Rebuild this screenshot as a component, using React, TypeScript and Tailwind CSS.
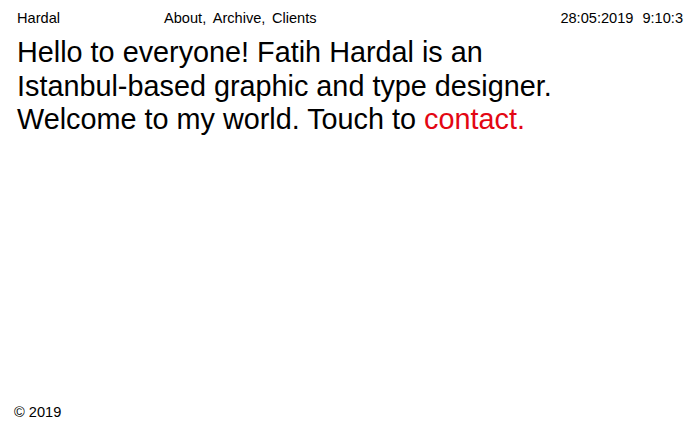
export default function App() {
  return (
    <div
      className="relative w-[700px] h-[438px] bg-white text-black flex flex-col overflow-hidden"
      style={{ fontFamily: '"Liberation Sans", Arial, sans-serif' }}
    >
      <header className="flex items-start px-[17px] pt-[9px] text-[14.6px] leading-[18px]">
        <div className="w-[147px]">Hardal</div>
        <nav className="flex gap-[6.5px]">
          <span>About,</span>
          <span>Archive,</span>
          <span>Clients</span>
        </nav>
        <div className="ml-auto flex gap-[9px]">
          <span>28:05:2019</span>
          <span>9:10:3</span>
        </div>
      </header>
      <main className="px-[17px] pt-[9px] text-[28.8px] leading-[33.5px]">
        <p>
          Hello to everyone! Fatih Hardal is an
          <br />
          Istanbul-based graphic and type designer.
          <br />
          Welcome to my world. Touch to <span className="text-[#e30613]">contact.</span>
        </p>
      </main>
      <footer className="mt-auto px-[14px] pb-[17px] text-[14.6px] leading-[18px]">© 2019</footer>
    </div>
  );
}
